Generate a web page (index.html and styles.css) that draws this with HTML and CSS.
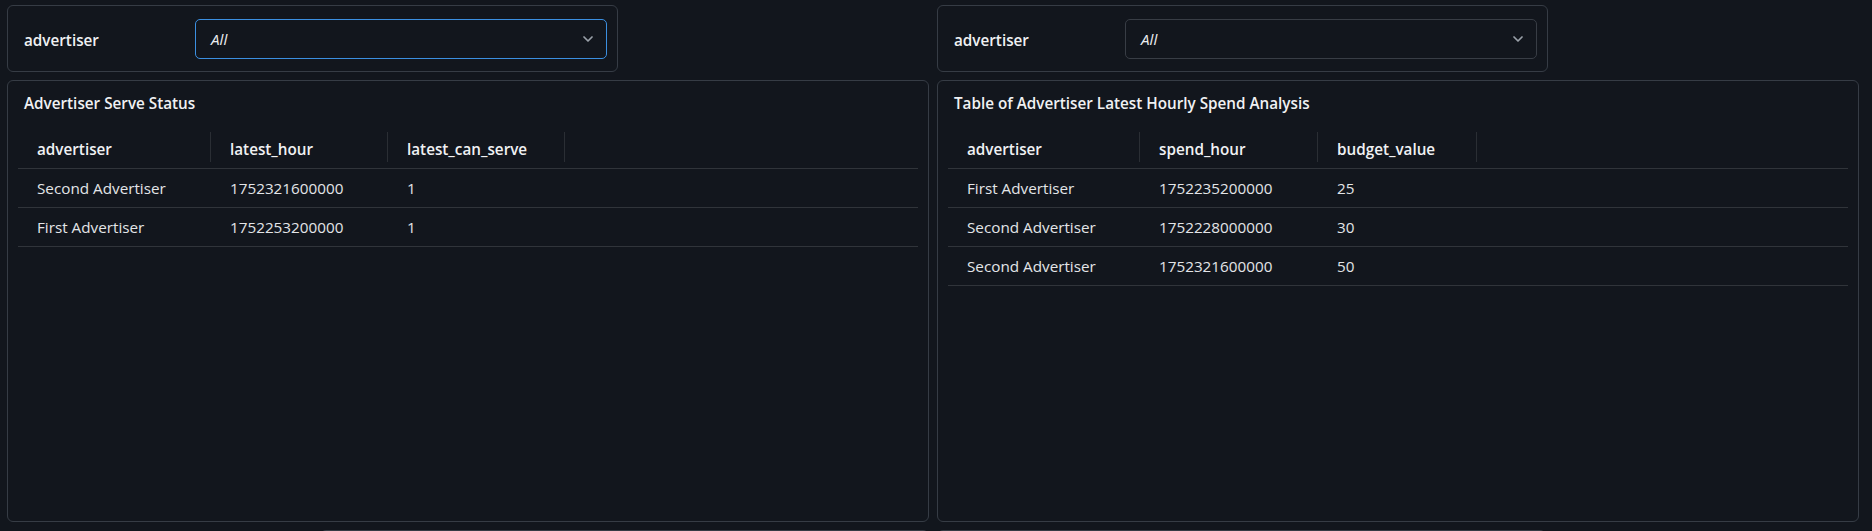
FILE: index.html
```html
<!DOCTYPE html>
<html lang="en">
<head>
<meta charset="utf-8">
<title>Advertiser Dashboard</title>
<link rel="stylesheet" href="styles.css">
</head>
<body>
<div class="dashboard">
  <div class="filter-card">
    <label class="filter-label">advertiser</label>
    <div class="select select-focused">
      <span class="select-value">All</span>
      <svg class="chevron" width="10" height="6" viewBox="0 0 10 6"><path d="M1 1l4 4 4-4" fill="none" stroke="currentColor" stroke-width="1.7" stroke-linecap="round" stroke-linejoin="round"/></svg>
    </div>
  </div>
  <div class="filter-card">
    <label class="filter-label">advertiser</label>
    <div class="select">
      <span class="select-value">All</span>
      <svg class="chevron" width="10" height="6" viewBox="0 0 10 6"><path d="M1 1l4 4 4-4" fill="none" stroke="currentColor" stroke-width="1.7" stroke-linecap="round" stroke-linejoin="round"/></svg>
    </div>
  </div>

  <div class="panel">
    <div class="panel-title">Advertiser Serve Status</div>
    <div class="table t1">
      <div class="tr thead">
        <div class="th">advertiser</div>
        <div class="th">latest_hour</div>
        <div class="th">latest_can_serve</div>
      </div>
      <div class="tr">
        <div class="td">Second Advertiser</div>
        <div class="td">1752321600000</div>
        <div class="td">1</div>
      </div>
      <div class="tr">
        <div class="td">First Advertiser</div>
        <div class="td">1752253200000</div>
        <div class="td">1</div>
      </div>
    </div>
  </div>

  <div class="panel">
    <div class="panel-title">Table of Advertiser Latest Hourly Spend Analysis</div>
    <div class="table t2">
      <div class="tr thead">
        <div class="th">advertiser</div>
        <div class="th">spend_hour</div>
        <div class="th">budget_value</div>
      </div>
      <div class="tr">
        <div class="td">First Advertiser</div>
        <div class="td">1752235200000</div>
        <div class="td">25</div>
      </div>
      <div class="tr">
        <div class="td">Second Advertiser</div>
        <div class="td">1752228000000</div>
        <div class="td">30</div>
      </div>
      <div class="tr">
        <div class="td">Second Advertiser</div>
        <div class="td">1752321600000</div>
        <div class="td">50</div>
      </div>
    </div>
  </div>

  <div class="stub stub-right"></div>
  <div class="stub"></div>
</div>
</body>
</html>
```

FILE: styles.css
```css
html, body {
  margin: 0;
  padding: 0;
  background: #12161d;
  height: 531px;
  overflow: hidden;
}

body {
  font-family: "Open Sans", "Noto Sans", sans-serif;
  font-size: 15.25px;
  color: #e6e8eb;
}

.dashboard {
  box-sizing: border-box;
  height: 531px;
  overflow: hidden;
  display: grid;
  grid-template-columns: 922px 922px;
  grid-template-rows: 67px 442px 60px;
  column-gap: 8px;
  row-gap: 8px;
  padding: 5px 0 0 7px;
}

.filter-card {
  box-sizing: border-box;
  width: 611px;
  border: 1px solid #363c45;
  border-radius: 6px;
  display: flex;
  align-items: center;
  padding: 0 10px 0 16px;
}

.filter-label {
  width: 171px;
  flex: none;
  font-weight: 600;
  color: #f0f1f3;
  padding-top: 3px;
}

.select {
  box-sizing: border-box;
  flex: 1;
  height: 40px;
  margin-top: 1px;
  border: 1px solid #383d45;
  border-radius: 5px;
  display: flex;
  align-items: center;
  justify-content: space-between;
  padding: 0 13px 0 15px;
}

.select-focused {
  border-color: #3b8fe0;
}

.select-value {
  font-style: italic;
  color: #eceef0;
}

.chevron {
  color: #9aa1a9;
}

.panel {
  box-sizing: border-box;
  border: 1px solid #363c45;
  border-radius: 6px;
  padding: 12px 10px 0 10px;
}

.panel-title {
  font-weight: 600;
  line-height: 20px;
  padding-left: 6px;
  color: #f0f1f3;
  margin-bottom: 12px;
}

.tr {
  display: grid;
  height: 39px;
  border-bottom: 1px solid #30343a;
  box-sizing: border-box;
  align-items: center;
}

.t1 .tr { grid-template-columns: 193px 177px 177px; }
.t2 .tr { grid-template-columns: 192px 178px 159px; }

.thead {
  height: 44px;
}

.th, .td {
  padding-left: 19px;
  white-space: nowrap;
}

.th {
  font-weight: 600;
  color: #f0f1f3;
  height: 30px;
  line-height: 30px;
  border-right: 1px solid #2a2e34;
  padding-top: 2px;
  box-sizing: border-box;
}

.td {
  color: #e3e5e8;
}

.stub {
  box-sizing: border-box;
  width: 609px;
  border: 1px solid #363c45;
  border-radius: 6px;
}

.stub-right {
  justify-self: end;
}
```
